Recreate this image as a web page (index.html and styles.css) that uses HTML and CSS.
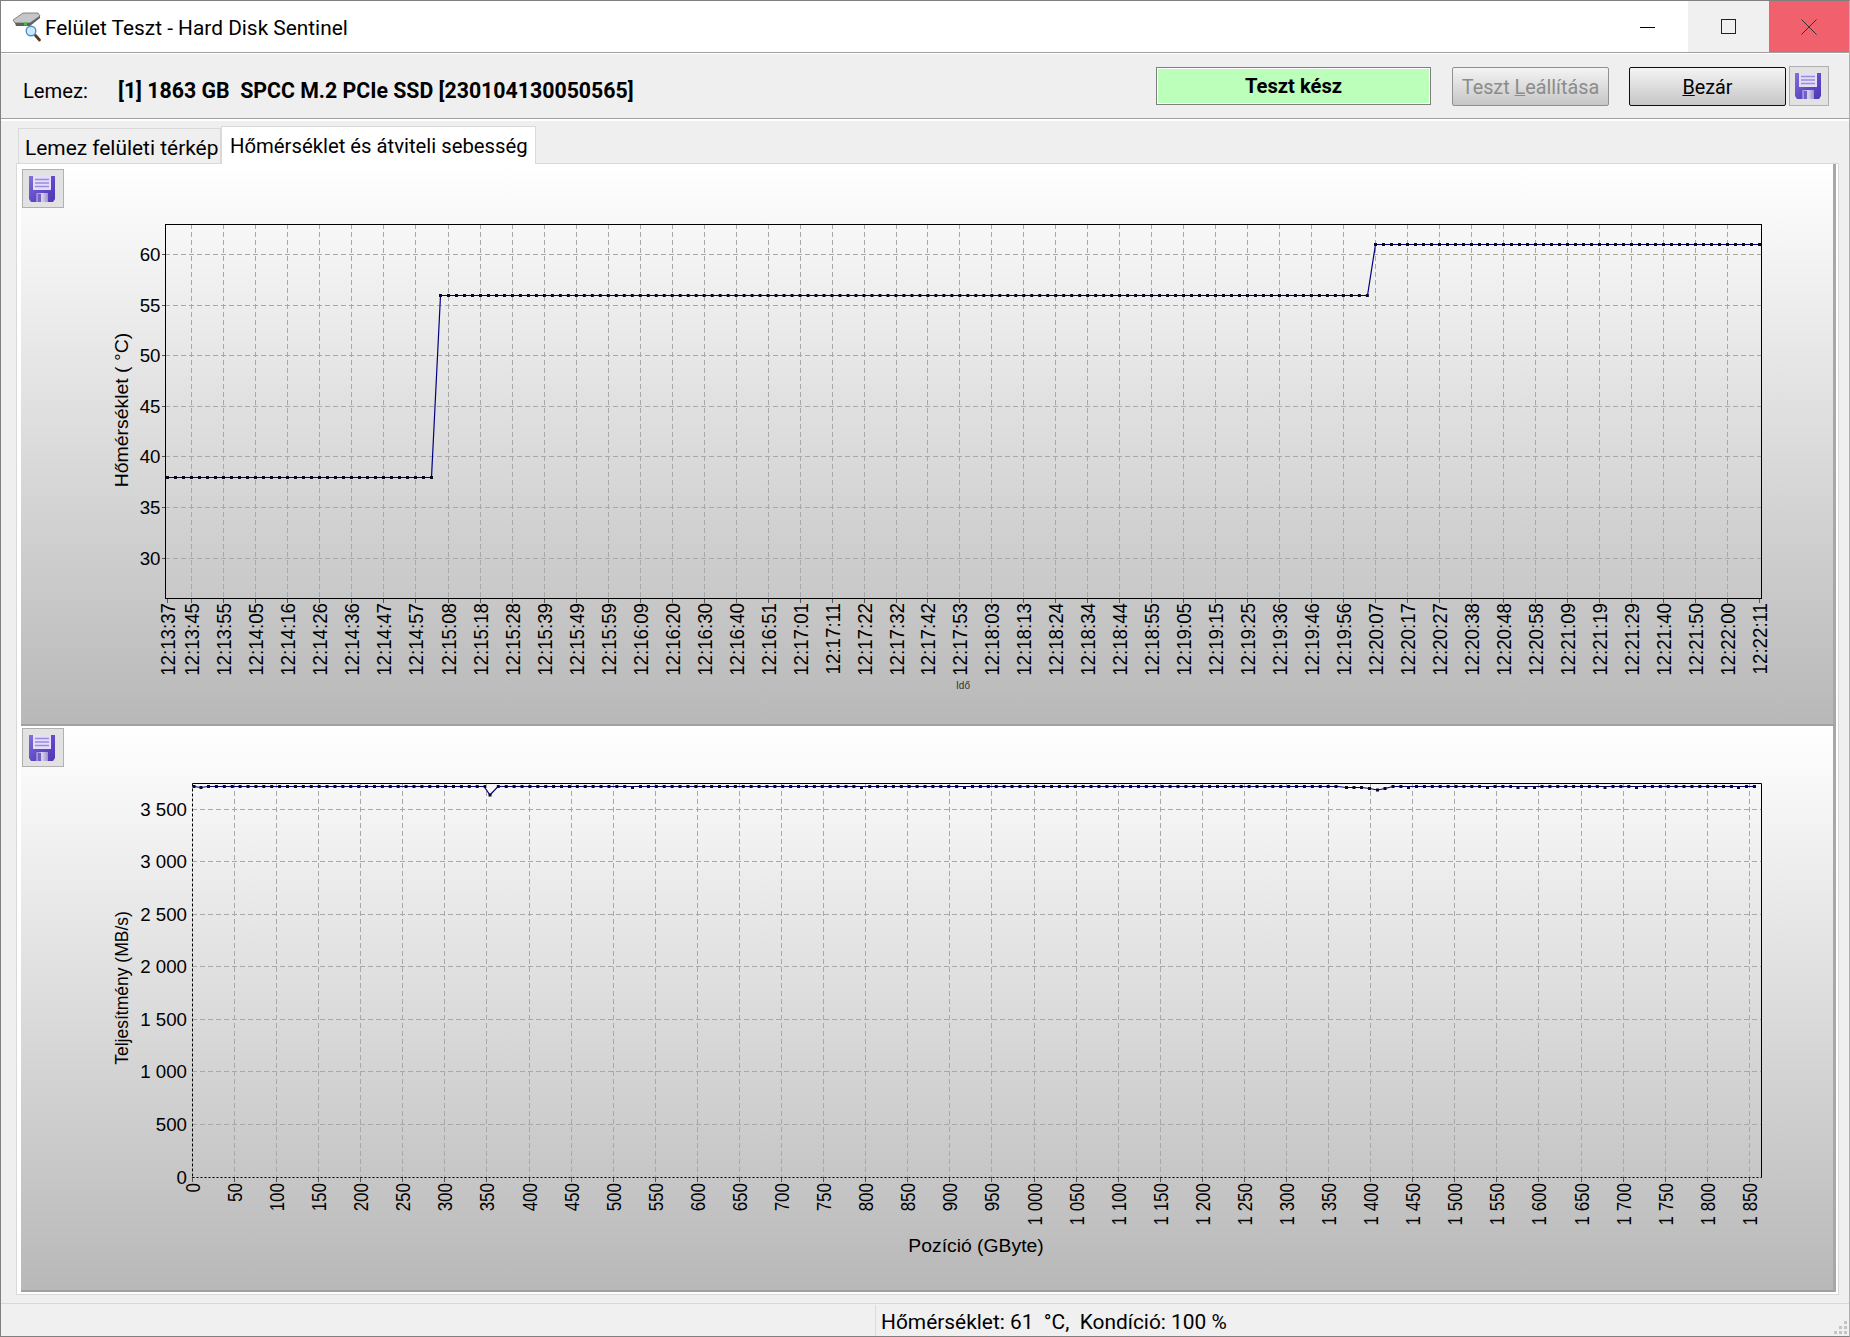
FILE: index.html
```html
<!DOCTYPE html>
<html lang="hu">
<head>
<meta charset="utf-8">
<title>Felület Teszt - Hard Disk Sentinel</title>
<link rel="stylesheet" href="styles.css">
</head>
<body>
<svg class="defs" width="0" height="0" aria-hidden="true">
  <defs>
    <linearGradient id="floppyBody" x1="0" y1="0" x2="1" y2="1">
      <stop offset="0" stop-color="#8470d8"/><stop offset=".55" stop-color="#6048c6"/><stop offset="1" stop-color="#5038b4"/>
    </linearGradient>
    <linearGradient id="floppyShutter" x1="0" y1="0" x2="1" y2="0">
      <stop offset="0" stop-color="#8d7ed6"/><stop offset=".5" stop-color="#d8d4ea"/><stop offset="1" stop-color="#9c90cc"/>
    </linearGradient>
    <symbol id="floppy" viewBox="0 0 26 26">
      <path d="M0 0H26V23L24 26H2L0 23Z" fill="url(#floppyBody)"/>
      <rect x="4" y="0" width="18" height="14" fill="#e4def8"/>
      <path d="M6 3.500H20M6 7H20M6 10.500H20" stroke="#9a8ae0" stroke-width="1.400"/>
      <rect x="7" y="17" width="12" height="9" fill="url(#floppyShutter)"/>
      <rect x="9" y="18" width="3" height="8" fill="#7460c4"/>
    </symbol>
  </defs>
</svg>
<div class="window">
  <header class="titlebar">
    <svg class="appicon" width="30" height="30" viewBox="0 0 30 30">
      <path d="M1 8L11 1H26L28 4L18 11H3Z" fill="#c4c6c8" stroke="#6c6c6c" stroke-width=".8"/>
      <path d="M3 11H18L28 4V6L18 14H4Z" fill="#5e6062"/>
      <rect x="12" y="10.500" width="3" height="3" fill="#3cc43c"/>
      <path d="M23.500 23.500L27.500 28" stroke="#5a3a20" stroke-width="2.800" stroke-linecap="round"/>
      <circle cx="19" cy="19" r="4.800" fill="#cfe8fb" stroke="#4a8fd0" stroke-width="1.400"/>
    </svg>
    <span class="apptitle">Felület Teszt - Hard Disk Sentinel</span>
    <div class="winbtns">
      <div class="winbtn"><svg width="16" height="16" viewBox="0 0 16 16"><path d="M0 8.500H15" stroke="#000"/></svg></div>
      <div class="winbtn winbtn-hover"><svg width="16" height="16" viewBox="0 0 16 16"><rect x=".5" y=".5" width="14" height="14" fill="none" stroke="#222"/></svg></div>
      <div class="winbtn winbtn-close"><svg width="16" height="16" viewBox="0 0 16 16"><path d="M.5 .5L15.500 15.500M15.500 .5L.5 15.500" stroke="#333" stroke-width="1"/></svg></div>
    </div>
  </header>

  <section class="toolbar">
    <span class="disk-label">Lemez:</span>
    <span class="disk-name">[1] 1863 GB  SPCC M.2 PCIe SSD [230104130050565]</span>
    <div class="actions">
      <div class="status-box">Teszt kész</div>
      <button class="btn btn-disabled" type="button">Teszt <u>L</u>eállítása</button>
      <button class="btn btn-default" type="button"><u>B</u>ezár</button>
      <div class="save save-top"><svg width="26" height="26"><use href="#floppy"/></svg></div>
    </div>
  </section>

  <nav class="tabs">
    <div class="tab">Lemez felületi térkép</div>
    <div class="tab tab-active">Hőmérséklet és átviteli sebesség</div>
  </nav>

  <main class="page">
    <section class="panel panel-temp">
      <div class="save save-chart"><svg width="26" height="26"><use href="#floppy"/></svg></div>
      <svg class="chart" width="1812" height="560" viewBox="21 164 1812 560">
        <path class="grid" d="M165 254.500H1761M165 305.500H1761M165 355.500H1761M165 406.500H1761M165 456.500H1761M165 507.500H1761M165 558.500H1761"/>
        <path class="grid" d="M191.500 224V598M223.500 224V598M255.500 224V598M287.500 224V598M319.500 224V598M351.500 224V598M383.500 224V598M415.500 224V598M448.500 224V598M480.500 224V598M512.500 224V598M544.500 224V598M576.500 224V598M608.500 224V598M640.500 224V598M672.500 224V598M704.500 224V598M736.500 224V598M768.500 224V598M800.500 224V598M832.500 224V598M864.500 224V598M896.500 224V598M927.500 224V598M959.500 224V598M991.500 224V598M1023.500 224V598M1055.500 224V598M1087.500 224V598M1119.500 224V598M1151.500 224V598M1183.500 224V598M1215.500 224V598M1247.500 224V598M1279.500 224V598M1311.500 224V598M1343.500 224V598M1375.500 224V598M1407.500 224V598M1439.500 224V598M1471.500 224V598M1503.500 224V598M1535.500 224V598M1567.500 224V598M1599.500 224V598M1631.500 224V598M1663.500 224V598M1695.500 224V598M1727.500 224V598"/>
        <path class="tick" d="M162 254.500H165M162 305.500H165M162 355.500H165M162 406.500H165M162 456.500H165M162 507.500H165M162 558.500H165"/>
        <path class="tick" d="M167.500 598V603M191.500 598V603M223.500 598V603M255.500 598V603M287.500 598V603M319.500 598V603M351.500 598V603M383.500 598V603M415.500 598V603M448.500 598V603M480.500 598V603M512.500 598V603M544.500 598V603M576.500 598V603M608.500 598V603M640.500 598V603M672.500 598V603M704.500 598V603M736.500 598V603M768.500 598V603M800.500 598V603M832.500 598V603M864.500 598V603M896.500 598V603M927.500 598V603M959.500 598V603M991.500 598V603M1023.500 598V603M1055.500 598V603M1087.500 598V603M1119.500 598V603M1151.500 598V603M1183.500 598V603M1215.500 598V603M1247.500 598V603M1279.500 598V603M1311.500 598V603M1343.500 598V603M1375.500 598V603M1407.500 598V603M1439.500 598V603M1471.500 598V603M1503.500 598V603M1535.500 598V603M1567.500 598V603M1599.500 598V603M1631.500 598V603M1663.500 598V603M1695.500 598V603M1727.500 598V603M1759.500 598V603"/>
        <rect class="frame" x="165.500" y="224.500" width="1596" height="374"/>
        <polyline class="series" points="166,477.500 431.500,477.500 440.500,295.500 1367.500,295.500 1375.500,244.500 1761,244.500"/>
        <path class="markers" d="M166 477.500H433"/>
        <path class="markers markers-mid" d="M439 295.500H1369"/>
        <path class="markers" d="M1374 244.500H1761"/>
        <g class="ylabels">
          <text x="160.500" y="261">60</text><text x="160.500" y="312">55</text><text x="160.500" y="362">50</text><text x="160.500" y="413">45</text><text x="160.500" y="463">40</text><text x="160.500" y="514">35</text><text x="160.500" y="565">30</text>
        </g>
        <g class="xlabels-time">
          <text transform="translate(174.500 603) rotate(-90) scale(.935 1)">12:13:37</text>
          <text transform="translate(198.500 603) rotate(-90) scale(.935 1)">12:13:45</text>
          <text transform="translate(230.500 603) rotate(-90) scale(.935 1)">12:13:55</text>
          <text transform="translate(262.500 603) rotate(-90) scale(.935 1)">12:14:05</text>
          <text transform="translate(294.500 603) rotate(-90) scale(.935 1)">12:14:16</text>
          <text transform="translate(326.500 603) rotate(-90) scale(.935 1)">12:14:26</text>
          <text transform="translate(358.500 603) rotate(-90) scale(.935 1)">12:14:36</text>
          <text transform="translate(390.500 603) rotate(-90) scale(.935 1)">12:14:47</text>
          <text transform="translate(422.500 603) rotate(-90) scale(.935 1)">12:14:57</text>
          <text transform="translate(455.500 603) rotate(-90) scale(.935 1)">12:15:08</text>
          <text transform="translate(487.500 603) rotate(-90) scale(.935 1)">12:15:18</text>
          <text transform="translate(519.500 603) rotate(-90) scale(.935 1)">12:15:28</text>
          <text transform="translate(551.500 603) rotate(-90) scale(.935 1)">12:15:39</text>
          <text transform="translate(583.500 603) rotate(-90) scale(.935 1)">12:15:49</text>
          <text transform="translate(615.500 603) rotate(-90) scale(.935 1)">12:15:59</text>
          <text transform="translate(647.500 603) rotate(-90) scale(.935 1)">12:16:09</text>
          <text transform="translate(679.500 603) rotate(-90) scale(.935 1)">12:16:20</text>
          <text transform="translate(711.500 603) rotate(-90) scale(.935 1)">12:16:30</text>
          <text transform="translate(743.500 603) rotate(-90) scale(.935 1)">12:16:40</text>
          <text transform="translate(775.500 603) rotate(-90) scale(.935 1)">12:16:51</text>
          <text transform="translate(807.500 603) rotate(-90) scale(.935 1)">12:17:01</text>
          <text transform="translate(839.500 603) rotate(-90) scale(.935 1)">12:17:11</text>
          <text transform="translate(871.500 603) rotate(-90) scale(.935 1)">12:17:22</text>
          <text transform="translate(903.500 603) rotate(-90) scale(.935 1)">12:17:32</text>
          <text transform="translate(934.500 603) rotate(-90) scale(.935 1)">12:17:42</text>
          <text transform="translate(966.500 603) rotate(-90) scale(.935 1)">12:17:53</text>
          <text transform="translate(998.500 603) rotate(-90) scale(.935 1)">12:18:03</text>
          <text transform="translate(1030.500 603) rotate(-90) scale(.935 1)">12:18:13</text>
          <text transform="translate(1062.500 603) rotate(-90) scale(.935 1)">12:18:24</text>
          <text transform="translate(1094.500 603) rotate(-90) scale(.935 1)">12:18:34</text>
          <text transform="translate(1126.500 603) rotate(-90) scale(.935 1)">12:18:44</text>
          <text transform="translate(1158.500 603) rotate(-90) scale(.935 1)">12:18:55</text>
          <text transform="translate(1190.500 603) rotate(-90) scale(.935 1)">12:19:05</text>
          <text transform="translate(1222.500 603) rotate(-90) scale(.935 1)">12:19:15</text>
          <text transform="translate(1254.500 603) rotate(-90) scale(.935 1)">12:19:25</text>
          <text transform="translate(1286.500 603) rotate(-90) scale(.935 1)">12:19:36</text>
          <text transform="translate(1318.500 603) rotate(-90) scale(.935 1)">12:19:46</text>
          <text transform="translate(1350.500 603) rotate(-90) scale(.935 1)">12:19:56</text>
          <text transform="translate(1382.500 603) rotate(-90) scale(.935 1)">12:20:07</text>
          <text transform="translate(1414.500 603) rotate(-90) scale(.935 1)">12:20:17</text>
          <text transform="translate(1446.500 603) rotate(-90) scale(.935 1)">12:20:27</text>
          <text transform="translate(1478.500 603) rotate(-90) scale(.935 1)">12:20:38</text>
          <text transform="translate(1510.500 603) rotate(-90) scale(.935 1)">12:20:48</text>
          <text transform="translate(1542.500 603) rotate(-90) scale(.935 1)">12:20:58</text>
          <text transform="translate(1574.500 603) rotate(-90) scale(.935 1)">12:21:09</text>
          <text transform="translate(1606.500 603) rotate(-90) scale(.935 1)">12:21:19</text>
          <text transform="translate(1638.500 603) rotate(-90) scale(.935 1)">12:21:29</text>
          <text transform="translate(1670.500 603) rotate(-90) scale(.935 1)">12:21:40</text>
          <text transform="translate(1702.500 603) rotate(-90) scale(.935 1)">12:21:50</text>
          <text transform="translate(1734.500 603) rotate(-90) scale(.935 1)">12:22:00</text>
          <text transform="translate(1766.500 603) rotate(-90) scale(.935 1)">12:22:11</text>
        </g>
        <text class="axis-title" transform="translate(128 410) rotate(-90) scale(1.11 1)">Hőmérséklet ( °C)</text>
        <text class="axis-small" x="963" y="689">Idő</text>
      </svg>
    </section>

    <section class="panel panel-speed">
      <div class="save save-chart2"><svg width="26" height="26"><use href="#floppy"/></svg></div>
      <svg class="chart" width="1812" height="564" viewBox="21 726 1812 564">
        <path class="grid" d="M192 809.500H1761M192 861.500H1761M192 914.500H1761M192 966.500H1761M192 1019.500H1761M192 1071.500H1761M192 1124.500H1761"/>
        <path class="grid" d="M234.500 783V1177M276.500 783V1177M318.500 783V1177M360.500 783V1177M402.500 783V1177M444.500 783V1177M486.500 783V1177M529.500 783V1177M571.500 783V1177M613.500 783V1177M655.500 783V1177M697.500 783V1177M739.500 783V1177M781.500 783V1177M823.500 783V1177M865.500 783V1177M907.500 783V1177M949.500 783V1177M991.500 783V1177M1034.500 783V1177M1076.500 783V1177M1118.500 783V1177M1160.500 783V1177M1202.500 783V1177M1244.500 783V1177M1286.500 783V1177M1328.500 783V1177M1370.500 783V1177M1412.500 783V1177M1454.500 783V1177M1496.500 783V1177M1538.500 783V1177M1581.500 783V1177M1623.500 783V1177M1665.500 783V1177M1707.500 783V1177M1749.500 783V1177"/>
        <path class="tick" d="M192.500 1177V1182M234.500 1177V1182M276.500 1177V1182M318.500 1177V1182M360.500 1177V1182M402.500 1177V1182M444.500 1177V1182M486.500 1177V1182M529.500 1177V1182M571.500 1177V1182M613.500 1177V1182M655.500 1177V1182M697.500 1177V1182M739.500 1177V1182M781.500 1177V1182M823.500 1177V1182M865.500 1177V1182M907.500 1177V1182M949.500 1177V1182M991.500 1177V1182M1034.500 1177V1182M1076.500 1177V1182M1118.500 1177V1182M1160.500 1177V1182M1202.500 1177V1182M1244.500 1177V1182M1286.500 1177V1182M1328.500 1177V1182M1370.500 1177V1182M1412.500 1177V1182M1454.500 1177V1182M1496.500 1177V1182M1538.500 1177V1182M1581.500 1177V1182M1623.500 1177V1182M1665.500 1177V1182M1707.500 1177V1182M1749.500 1177V1182"/>
        <path class="frame" d="M192.500 783.500H1761.500V1177.500"/>
        <path class="frame frame-dash" d="M192.500 783.500V1177.500"/>
        <path class="frame frame-dots" d="M192.500 1177.500H1761.500"/>
        <polyline class="series" points="194,786.500 201,787.500 208,786.500 484,786.500 490,795 498,786.500 1338,786.500 1346,787.500 1362,787.500 1369.500,788.500 1377.500,790 1385,788.500 1393,786.500 1756,786.500"/>
        <path class="markers-solid" d="M192.500 786.500h3M199.500 787.500h3M631 787.500h3M860 787.500h3M963 787.500h3M488.500 795h3M1345 787.500h3M1352.500 787.500h3M1360 787.500h3M1368 788.500h3M1376 790h3M1383.500 788.500h3M1407 787.500h3M1486 787.500h3M1516.500 787.500h3M1524.500 787.500h3M1533 787.500h3M1603.500 787.500h3M1635 787.500h3M1737 787.500h3"/>
        <path class="markers markers-fine" d="M207 786.500H486"/>
        <path class="markers markers-fine" d="M496.800 786.500H628M639 786.500H856M868.200 786.500H959M971 786.500H1340M1391.500 786.500H1403M1415 786.500H1481M1493.500 786.500H1512M1540.500 786.500H1599M1611.500 786.500H1631M1643 786.500H1733M1745 786.500H1756"/>
        <g class="ylabels">
          <text x="187" y="816">3 500</text><text x="187" y="868">3 000</text><text x="187" y="921">2 500</text><text x="187" y="973">2 000</text><text x="187" y="1026">1 500</text><text x="187" y="1078">1 000</text><text x="187" y="1131">500</text><text x="187" y="1184">0</text>
        </g>
        <g class="xlabels-pos">
          <text transform="translate(200 1183) rotate(-90) scale(.85 1)">0</text>
          <text transform="translate(241.500 1183) rotate(-90) scale(.85 1)">50</text>
          <text transform="translate(283.500 1183) rotate(-90) scale(.85 1)">100</text>
          <text transform="translate(325.500 1183) rotate(-90) scale(.85 1)">150</text>
          <text transform="translate(367.500 1183) rotate(-90) scale(.85 1)">200</text>
          <text transform="translate(409.500 1183) rotate(-90) scale(.85 1)">250</text>
          <text transform="translate(451.500 1183) rotate(-90) scale(.85 1)">300</text>
          <text transform="translate(493.500 1183) rotate(-90) scale(.85 1)">350</text>
          <text transform="translate(536.500 1183) rotate(-90) scale(.85 1)">400</text>
          <text transform="translate(578.500 1183) rotate(-90) scale(.85 1)">450</text>
          <text transform="translate(620.500 1183) rotate(-90) scale(.85 1)">500</text>
          <text transform="translate(662.500 1183) rotate(-90) scale(.85 1)">550</text>
          <text transform="translate(704.500 1183) rotate(-90) scale(.85 1)">600</text>
          <text transform="translate(746.500 1183) rotate(-90) scale(.85 1)">650</text>
          <text transform="translate(788.500 1183) rotate(-90) scale(.85 1)">700</text>
          <text transform="translate(830.500 1183) rotate(-90) scale(.85 1)">750</text>
          <text transform="translate(872.500 1183) rotate(-90) scale(.85 1)">800</text>
          <text transform="translate(914.500 1183) rotate(-90) scale(.85 1)">850</text>
          <text transform="translate(956.500 1183) rotate(-90) scale(.85 1)">900</text>
          <text transform="translate(998.500 1183) rotate(-90) scale(.85 1)">950</text>
          <text transform="translate(1041.500 1183) rotate(-90) scale(.85 1)">1 000</text>
          <text transform="translate(1083.500 1183) rotate(-90) scale(.85 1)">1 050</text>
          <text transform="translate(1125.500 1183) rotate(-90) scale(.85 1)">1 100</text>
          <text transform="translate(1167.500 1183) rotate(-90) scale(.85 1)">1 150</text>
          <text transform="translate(1209.500 1183) rotate(-90) scale(.85 1)">1 200</text>
          <text transform="translate(1251.500 1183) rotate(-90) scale(.85 1)">1 250</text>
          <text transform="translate(1293.500 1183) rotate(-90) scale(.85 1)">1 300</text>
          <text transform="translate(1335.500 1183) rotate(-90) scale(.85 1)">1 350</text>
          <text transform="translate(1377.500 1183) rotate(-90) scale(.85 1)">1 400</text>
          <text transform="translate(1419.500 1183) rotate(-90) scale(.85 1)">1 450</text>
          <text transform="translate(1461.500 1183) rotate(-90) scale(.85 1)">1 500</text>
          <text transform="translate(1503.500 1183) rotate(-90) scale(.85 1)">1 550</text>
          <text transform="translate(1545.500 1183) rotate(-90) scale(.85 1)">1 600</text>
          <text transform="translate(1588.500 1183) rotate(-90) scale(.85 1)">1 650</text>
          <text transform="translate(1630.500 1183) rotate(-90) scale(.85 1)">1 700</text>
          <text transform="translate(1672.500 1183) rotate(-90) scale(.85 1)">1 750</text>
          <text transform="translate(1714.500 1183) rotate(-90) scale(.85 1)">1 800</text>
          <text transform="translate(1756.500 1183) rotate(-90) scale(.85 1)">1 850</text>
        </g>
        <text class="axis-title" transform="translate(128 988) rotate(-90)">Teljesítmény (MB/s)</text>
        <text class="axis-title" transform="translate(976 1252) scale(1.105 1)">Pozíció (GByte)</text>
      </svg>
    </section>
  </main>

  <footer class="statusbar">
    <div class="status-text">Hőmérséklet: 61  °C,  Kondíció: 100 %</div>
    <svg class="grip" width="16" height="16" viewBox="0 0 16 16">
      <path d="M12 1h3v3h-3zM7 6h3v3H7zM12 6h3v3h-3zM2 11h3v3H2zM7 11h3v3H7zM12 11h3v3h-3z" fill="#c4c4c4"/>
    </svg>
  </footer>
</div>
</body>
</html>
```
FILE: styles.css
```css
* { box-sizing: border-box; }

html, body { margin: 0; height: 100%; }

body {
  width: 1850px;
  height: 1337px;
  overflow: hidden;
  background: #efefef;
  font-family: "Roboto", "Noto Sans", sans-serif;
  color: #000;
}

.defs { position: absolute; }

.window {
  display: flex;
  flex-direction: column;
  width: 1850px;
  height: 1337px;
  background: #efefef;
  border: 1px solid #808080;
  border-right-color: #b0b0b0;
}

/* Title bar */
.titlebar {
  display: flex;
  align-items: center;
  height: 51px;
  flex: none;
  background: #fff;
}

.appicon { margin: 0 3px 0 11px; flex: none; }

.apptitle { font-size: 20.85px; line-height: 1; padding-top: 4px; }

.winbtns { display: flex; margin-left: auto; align-self: stretch; }

.winbtn {
  display: flex;
  align-items: center;
  justify-content: center;
  width: 81px;
  height: 51px;
}

.winbtn-hover { background: #f0f0f0; }
.winbtn-close { background: #f1606d; width: 80px; }

/* Toolbar */
.toolbar {
  display: flex;
  align-items: center;
  flex: none;
  height: 69px;
  padding: 0 0 0 22px;
  border-top: 1px solid #a0a0a0;
  border-bottom: 2px solid #fff;
  box-shadow: inset 0 1px 0 #fff, inset 0 -1px 0 #a0a0a0;
}

.disk-label { font-size: 20.2px; width: 95px; margin-top: 9px; }

.disk-name { font-size: 21.3px; font-weight: 700; white-space: pre; margin-top: 9px; }

.actions {
  display: flex;
  align-items: center;
  margin-left: auto;
  padding-right: 20px;
}

.status-box {
  display: flex;
  align-items: center;
  justify-content: center;
  width: 275px;
  height: 38px;
  margin-right: 21px;
  background: #bbffbb;
  border: 1px solid #808080;
  box-shadow: inset 0 0 0 1px #fff;
  font-size: 20.2px;
  font-weight: 700;
}

.btn {
  width: 157px;
  height: 39px;
  padding: 2px 0 0;
  font: 19.8px "Roboto", "Noto Sans", sans-serif;
  border-radius: 2px;
  border: 1px solid #8c8c8c;
  background: linear-gradient(#f4f4f4, #c6c6c6);
}

.btn-disabled { color: #8c8c8c; border-color: #909090; margin-right: 20px; }
.btn-default { color: #000; border-color: #000080; margin-right: 3px; }

.save {
  display: flex;
  align-items: center;
  justify-content: center;
  width: 42px;
  height: 39px;
  padding-right: 2px;
  background: #e2e2e2;
  border: 1px solid #b0b0b0;
}

.save-top { width: 40px; height: 40px; }

/* Tabs */
.tabs {
  display: flex;
  align-items: flex-end;
  flex: none;
  height: 42px;
  padding-left: 17px;
}

.tab {
  display: flex;
  align-items: center;
  width: 203px;
  height: 35px;
  padding: 3px 0 0 6px;
  background: #efefef;
  border: 1px solid #d9d9d9;
  border-bottom: 0;
  font-size: 20.9px;
  white-space: nowrap;
}

.tab-active {
  width: 315px;
  height: 38px;
  padding: 0 0 0 8px;
  background: #fff;
  font-size: 20.3px;
  position: relative;
  top: 1px;
}

/* Page with both chart panels */
.page {
  display: flex;
  flex-direction: column;
  flex: none;
  width: 1823px;
  height: 1132px;
  margin-left: 15px;
  padding: 0 2px 0 4px;
  background: #fff;
  border: 1px solid #d9d9d9;
}

.panel {
  display: grid;
  flex: none;
  width: 1815px;
  background: linear-gradient(#fff, #b8b8b8);
  border-right: 3px solid #a8a8a8;
  border-bottom: 2px solid #a0a0a0;
}

.panel > * { grid-area: 1 / 1; }

.panel-temp { height: 562px; }
.panel-speed { height: 566px; }

.save-chart { margin: 5px 0 0 1px; z-index: 1; }
.save-chart2 { margin: 2px 0 0 1px; z-index: 1; }

/* Charts */
.chart { display: block; font-family: "Liberation Sans", Arial, sans-serif; }

.grid { fill: none; stroke: #a8a8a8; stroke-width: 1; stroke-dasharray: 5 3; }
.tick { fill: none; stroke: #555; stroke-width: 1; }
.frame { fill: none; stroke: #000; stroke-width: 1; }
.frame-dash { stroke-dasharray: 3 2; }
.frame-dots { stroke-dasharray: 2 2; }

.series { fill: none; stroke: #000080; stroke-width: 1.2; }
.markers { fill: none; stroke: #0a0a20; stroke-width: 3; stroke-dasharray: 3 5; }
.markers-mid { stroke-dasharray: 3 4.99; }
.markers-fine { stroke-dasharray: 3 4.903; }
.markers-solid { fill: none; stroke: #0a0a20; stroke-width: 3; }

.ylabels text { font-size: 18.7px; text-anchor: end; }
.xlabels-time text { font-size: 20px; text-anchor: end; }
.xlabels-pos text { font-size: 20px; text-anchor: end; }
.axis-title { font-size: 17.5px; text-anchor: middle; }
.axis-small { font-size: 10px; text-anchor: middle; fill: #333; }

/* Status bar */
.statusbar {
  display: flex;
  align-items: stretch;
  flex: none;
  height: 33px;
  margin-top: 8px;
  padding: 1px 0 0 874px;
  background: #f0f0f0;
  border-top: 1px solid #d8d8d8;
}

.status-text {
  display: flex;
  align-items: center;
  white-space: pre;
  padding: 2px 0 0 5px;
  border-left: 1px solid #dcdcdc;
  font-size: 20.9px;
}

.grip { margin: auto 1px 0 auto; }
```
